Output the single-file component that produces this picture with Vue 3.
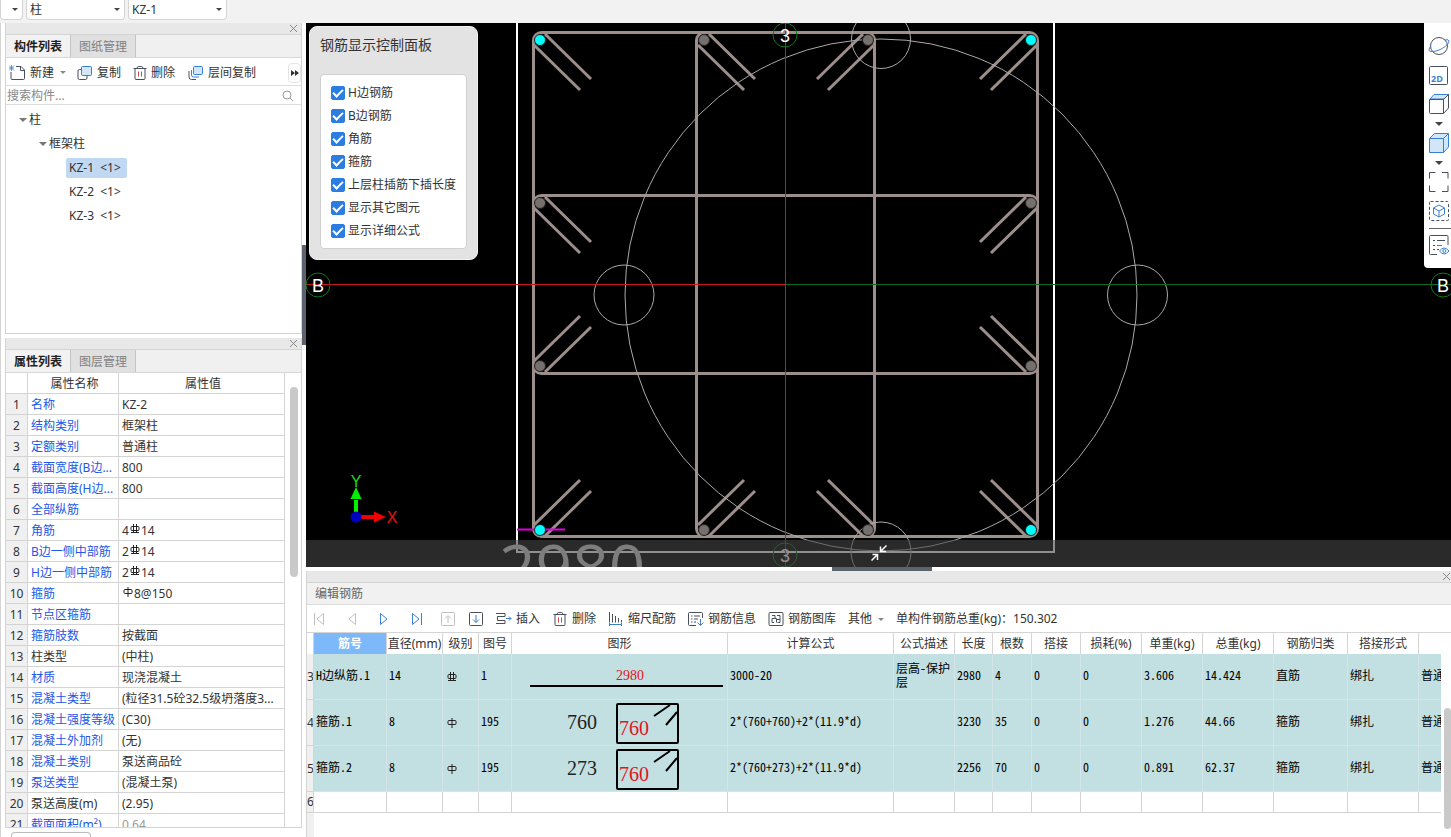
<template>
  <div class="app">
    <header class="topbar">
      <label class="combo combo-first"><select aria-label="楼层"><option></option></select></label>
      <label class="combo"><select aria-label="构件类型"><option>柱</option></select></label>
      <label class="combo"><select aria-label="构件名称"><option>KZ-1</option></select></label>
    </header>

    <div class="body">
      <aside class="sidebar">
        <section class="panel panel-list">
          <div class="strip">
            <button class="close" aria-label="关闭">
              <svg width="9" height="9" viewBox="0 0 9 9"><path d="M1 1l7 7M8 1l-7 7" /></svg>
            </button>
          </div>
          <div class="tabs">
            <button class="tab active">构件列表</button>
            <button class="tab">图纸管理</button>
          </div>
          <div class="tools">
            <button class="tool">
              <svg class="icon" width="17" height="16" viewBox="0 0 17 16">
                <path d="M7 1.500h5l3.500 3.500v8.500q0 1-1 1H3q-1 0-1-1V7M11.500 1.500v4h4" />
                <path class="blue thin" d="M0 .5l5 5M5 .5l-5 5M2.500 0v6M0 3h5" />
              </svg>
              新建
            </button>
            <i class="caret gray"></i>
            <button class="tool copy">
              <svg class="icon" width="16" height="16" viewBox="0 0 16 16">
                <path d="M4 4.500H2.500q-1.500 0-1.500 1.500v7q0 1.500 1.500 1.500h6q1.500 0 1.500-1.500V11" />
                <rect class="blue fill" x="4.500" y="1.500" width="10" height="9" rx="1" />
              </svg>
              复制
            </button>
            <button class="tool del">
              <svg class="icon" width="14" height="16" viewBox="0 0 14 16">
                <path d="M.5 3.500h13M4 3.500q0-2 1.500-2h3q1.500 0 1.500 2M2 3.500v10q0 1 1 1h8q1 0 1-1v-10" />
                <path class="red" d="M5.500 6.500v5M8.500 6.500v5" />
              </svg>
              删除
            </button>
            <button class="tool layer">
              <svg class="icon" width="16" height="16" viewBox="0 0 16 16">
                <path d="M1 6v6q0 2.500 2.500 2.500H8" />
                <path class="blue" d="M3.500 5v5q0 2 2 2H11" />
                <rect class="blue fill" x="5.500" y="1.500" width="9" height="8" rx="1" />
              </svg>
              层间复制
            </button>
            <button class="more" aria-label="更多">
              <svg width="8" height="6" viewBox="0 0 8 6"><path d="M0 0l4 3-4 3zM4 0l4 3-4 3z" fill="#333" /></svg>
            </button>
          </div>
          <div class="search">
            <input type="text" placeholder="搜索构件..." aria-label="搜索构件" />
            <svg width="12" height="12" viewBox="0 0 12 12">
              <circle cx="5" cy="5" r="4" /><path d="M8 8l3 3" />
            </svg>
          </div>
          <ul class="tree">
            <li
              v-for="node in tree"
              :key="node.name"
              :class="['level-' + node.level, { selected: node.name === current }]"
              @click="current = node.name"
            >
              <i v-if="node.level < 3" class="caret tree-caret"></i>
              <span class="node">{{ node.name }} <template v-if="node.count">&nbsp;{{ node.count }}</template></span>
            </li>
          </ul>
        </section>

        <section class="panel panel-props">
          <div class="strip">
            <button class="close" aria-label="关闭">
              <svg width="9" height="9" viewBox="0 0 9 9"><path d="M1 1l7 7M8 1l-7 7" /></svg>
            </button>
          </div>
          <div class="tabs">
            <button class="tab active">属性列表</button>
            <button class="tab">图层管理</button>
          </div>
          <div class="props-wrap">
            <table class="props">
              <colgroup><col class="p-no" /><col class="p-name" /><col /></colgroup>
              <thead>
                <tr><th></th><th>属性名称</th><th>属性值</th></tr>
              </thead>
              <tbody>
                <tr v-for="(p, i) in props" :key="p.name">
                  <td class="no">{{ i + 1 }}</td>
                  <td :class="{ link: !p.plain }">{{ p.name }}</td>
                  <td :class="{ muted: p.muted }">
                    {{ p.value }}<svg v-if="p.grade" class="grade" width="10" height="10" viewBox="0 0 10 10"><path :d="grades[p.grade]" /></svg>{{ p.rest }}
                  </td>
                </tr>
              </tbody>
            </table>
            <div class="scroll"><div class="thumb"></div></div>
          </div>
        </section>
        <div class="stub"></div>
      </aside>

      <main class="main">
        <div class="view-row">
          <div class="splitter">
            <div class="grip"></div>
          </div>
          <div class="canvas">
            <svg class="drawing" viewBox="306 23 1145 544" preserveAspectRatio="xMinYMin slice">
              <g fill="none">
                <path stroke="#fff" stroke-width="2" d="M517 23V552H1054V23" />
                <g stroke="#9c8f8b" stroke-width="3">
                  <rect x="533.500" y="32.500" width="504" height="504" rx="8" />
                  <rect x="696.500" y="32.500" width="178" height="504" rx="8" />
                  <rect x="533.500" y="195.500" width="504" height="178" rx="8" />
                  <path v-for="h in hooks" :key="h" :d="h" />
                </g>
                <g stroke="#a9a9a9">
                  <circle cx="881" cy="295" r="256" />
                  <circle cx="624" cy="295" r="30" />
                  <circle cx="1137.500" cy="295" r="30" />
                  <circle cx="881" cy="39" r="29.500" />
                  <circle cx="881" cy="552" r="30" />
                </g>
                <g class="crisp">
                  <path stroke="#c81818" d="M785.500 23V567" />
                  <path stroke="#c81818" d="M306 284.500H785" />
                  <path stroke="#0c6e1c" d="M786 284.500H1451" />
                </g>
                <path stroke="#e000e0" stroke-width="2" d="M517 529.500H565" />
              </g>
              <g stroke="#222">
                <circle v-for="b in bars" :key="b.x + '-' + b.y" :cx="b.x" :cy="b.y" r="5.500" :fill="b.corner ? '#00ffff' : '#75706e'" />
              </g>
              <g class="axis">
                <g v-for="a in axes" :key="a.x + '-' + a.y">
                  <circle :cx="a.x" :cy="a.y" r="12" />
                  <text :x="a.x" :y="a.y + 7">{{ a.label }}</text>
                </g>
              </g>
              <path stroke="#00f000" stroke-width="4" d="M356 516V500" />
              <path fill="#00f000" d="M350.500 499L356 487l5.500 12z" />
              <path stroke="#f00000" stroke-width="4" d="M357 517H374" />
              <path fill="#f00000" d="M374 511.500L386 517l-12 5.500z" />
              <circle cx="356" cy="517" r="5.500" fill="#0000c0" />
              <text class="ucs" x="356" y="487" fill="#20d820">Y</text>
              <text class="ucs" x="392" y="523" fill="#f01010">X</text>
              <text class="dim" x="499" y="591">2980</text>
            </svg>

            <div class="control">
              <h3>钢筋显示控制面板</h3>
              <div class="options">
                <label v-for="o in options" :key="o.label">
                  <input v-model="o.on" type="checkbox" />{{ o.label }}
                </label>
              </div>
            </div>

            <nav class="viewbar">
              <button aria-label="动态观察">
                <svg class="icon" width="22" height="22" viewBox="0 0 22 22">
                  <circle cx="11" cy="11" r="8.500" />
                  <path class="blue" d="M17 5q4-1 4 1c0 3-5 7-10 9S1 17 1 15q0-2 2-4" />
                </svg>
              </button>
              <button aria-label="二维">
                <svg class="icon" width="22" height="22" viewBox="0 0 22 22">
                  <rect x="1.500" y="2.500" width="18" height="18" rx="1" />
                  <text x="3" y="18">2D</text>
                </svg>
              </button>
              <button aria-label="视图">
                <svg class="icon" width="22" height="22" viewBox="0 0 22 22">
                  <path class="blue fill" d="M2 6l4-4.500h14.500L16 6z" />
                  <path d="M1.500 6.500h14v14h-13q-1 0-1-1zM15.500 6.500l5-5v13.500l-5 5.500" />
                </svg>
              </button>
              <i class="caret"></i>
              <button aria-label="实体">
                <svg class="icon" width="22" height="22" viewBox="0 0 22 22">
                  <path class="blue fill" d="M1.500 6.500l5-5h14v13.500l-5 5.500h-14zM1.500 6.500h14v14M15.500 6.500l5-5" />
                </svg>
              </button>
              <i class="caret"></i>
              <button aria-label="全屏">
                <svg class="icon" width="22" height="22" viewBox="0 0 22 22">
                  <path d="M1.500 7.500V1.500h6M14 1.500h6v6M20 14.500v6h-6M7.500 20.500h-6v-6" />
                </svg>
              </button>
              <button aria-label="局部三维">
                <svg class="icon" width="22" height="22" viewBox="0 0 22 22">
                  <rect x="1.500" y="1.500" width="19" height="19" rx="1" stroke-dasharray="3 2" />
                  <path class="blue" d="M11 5l5.500 3v6L11 17l-5.500-3V8zM5.500 8L11 11l5.500-3M11 11v6" />
                </svg>
              </button>
              <hr />
              <button aria-label="显示设置">
                <svg class="icon" width="22" height="22" viewBox="0 0 22 22">
                  <path d="M20 11V2.500q0-1-1-1H2.500q-1 0-1 1v17q0 1 1 1H9M5 6.500h2M5 11.500h2M5 15.500h2M9 15.500h2M9 6.500h8" />
                  <path class="red" d="M9 11.500h5" />
                  <path class="blue" d="M11.500 17q4.500-6 9.500 0q-5 6-9.500 0z" />
                  <circle class="blue" cx="16.300" cy="17" r="1.500" />
                </svg>
              </button>
            </nav>

            <div class="dock">
              <svg width="16" height="16" viewBox="0 0 16 16">
                <path d="M15.500.5L9.500 6.500M9.500 1.500v5h5.500M.5 15.500l6-6M1.500 9.500h5v5.500" />
              </svg>
            </div>
          </div>
        </div>

        <div class="hsplit"><div class="hgrip"></div></div>

        <section class="editor">
          <div class="strip">
            <button class="close" aria-label="关闭">
              <svg width="9" height="9" viewBox="0 0 9 9"><path d="M1 1l7 7M8 1l-7 7" /></svg>
            </button>
          </div>
          <h2 class="title">编辑钢筋</h2>
          <div class="ebar">
            <button class="nav" aria-label="第一行">
              <svg class="icon off" width="16" height="16" viewBox="0 0 16 16"><path d="M2.500 2v12M11.500 2.500v11L5 8z" /></svg>
            </button>
            <button class="nav" aria-label="上一行">
              <svg class="icon off" width="16" height="16" viewBox="0 0 16 16"><path d="M11.500 2.500v11L5 8z" /></svg>
            </button>
            <button class="nav" aria-label="下一行">
              <svg class="icon" width="16" height="16" viewBox="0 0 16 16"><path class="blue" d="M4.500 2.500v11L11 8z" /></svg>
            </button>
            <button class="nav" aria-label="最后一行">
              <svg class="icon" width="16" height="16" viewBox="0 0 16 16"><path class="blue" d="M4.500 2.500v11L11 8zM13.500 2v12" /></svg>
            </button>
            <button class="step" aria-label="上移">
              <svg class="icon off" width="16" height="16" viewBox="0 0 16 16">
                <rect x="1.500" y="1.500" width="13" height="13" rx="1" /><path d="M8 12V5M5 7.500l3-3 3 3" />
              </svg>
            </button>
            <button class="step" aria-label="下移">
              <svg class="icon" width="16" height="16" viewBox="0 0 16 16">
                <rect x="1.500" y="1.500" width="13" height="13" rx="1" /><path class="blue" d="M8 4v7.500M5 8.500l3 3 3-3" />
              </svg>
            </button>
            <button class="tool">
              <svg class="icon" width="16" height="16" viewBox="0 0 16 16">
                <path d="M0 2.500h9M0 12.500h9M9 5.500H1.500v4H9M9 2.500v3M9 9.500v3" />
                <path class="blue" d="M10 7.500h5M13 5.500l2 2-2 2" />
              </svg>
              插入
            </button>
            <button class="tool">
              <svg class="icon" width="16" height="16" viewBox="-1 0 16 16">
                <path d="M.5 3.500h13M4 3.500q0-2 1.500-2h3q1.500 0 1.500 2M2 3.500v10q0 1 1 1h8q1 0 1-1v-10" />
                <path class="red" d="M5.500 6.500v5M8.500 6.500v5" />
              </svg>
              删除
            </button>
            <button class="tool">
              <svg class="icon" width="16" height="16" viewBox="0 0 16 16">
                <path d="M1.500 1v10.500M4.500 3v8.500M7.500 5v6.500M10.500 7v4.500M13.500 9v2.500" />
                <path class="blue" d="M1 13.500h13M1.500 12v3M13.500 12v3" />
              </svg>
              缩尺配筋
            </button>
            <button class="tool">
              <svg class="icon" width="16" height="16" viewBox="0 0 16 16">
                <path d="M14.500 7V2.500q0-1-1-1h-12q-1 0-1 1v11q0 1 1 1H8M3 5h1.500M6 5h6M3 8h1.500M6 8h4M3 11h1.500M6 11h2" />
                <path class="blue" d="M12.500 8v6M9.500 11.500l3 3 3-3" />
              </svg>
              钢筋信息
            </button>
            <button class="tool">
              <svg class="icon" width="16" height="16" viewBox="0 0 16 16">
                <rect x="1" y="1.500" width="14" height="13" rx="1" />
                <path d="M4 4.500h3v3H4v4h2M6 7.500h2.500v4M9 4.500h3v4M8.500 8.500h3.500v3H9.500" />
              </svg>
              钢筋图库
            </button>
            <button class="tool other">其他 <i class="caret gray"></i></button>
            <span class="sum">单构件钢筋总重(kg)：150.302</span>
          </div>

          <div class="grid-wrap">
            <div class="grid-clip">
              <table class="grid">
                <colgroup>
                  <col class="g-no" />
                  <col v-for="c in columns" :key="c.title" :style="{ width: c.width + 'px' }" />
                </colgroup>
                <thead>
                  <tr>
                    <th></th>
                    <th v-for="(c, i) in columns" :key="c.title" :class="{ picked: i === 0 }">{{ c.title }}</th>
                  </tr>
                </thead>
                <tbody>
                  <tr v-for="r in rows" :key="r.no" class="data">
                    <td class="no">{{ r.no }}</td>
                    <td>{{ r.name }}</td>
                    <td>{{ r.dia }}</td>
                    <td>
                      <svg class="grade" width="10" height="10" viewBox="0 0 10 10"><path :d="grades[r.grade]" /></svg>
                    </td>
                    <td>{{ r.shape }}</td>
                    <td class="figure">
                      <svg v-if="r.side" width="215" height="44" viewBox="0 0 215 44">
                        <text class="big" x="55" y="28">{{ r.side }}</text>
                        <text class="big red-text" x="107" y="34">760</text>
                        <rect x="105" y="3" width="61" height="39" rx="1" />
                        <path d="M142 15l16-11M154 24l11-13" />
                      </svg>
                      <svg v-else width="215" height="44" viewBox="0 0 215 44">
                        <text class="small red-text" x="104" y="25">2980</text>
                        <path d="M18 31h193" />
                      </svg>
                    </td>
                    <td>{{ r.formula }}</td>
                    <td class="wrap">{{ r.desc }}</td>
                    <td>{{ r.length }}</td>
                    <td>{{ r.count }}</td>
                    <td>0</td>
                    <td>0</td>
                    <td>{{ r.unit }}</td>
                    <td>{{ r.total }}</td>
                    <td>{{ r.kind }}</td>
                    <td>绑扎</td>
                    <td>普通钢筋</td>
                  </tr>
                  <tr class="blank">
                    <td class="no">6</td>
                    <td v-for="c in columns" :key="c.title"></td>
                  </tr>
                </tbody>
              </table>
              <div class="gutter"></div>
            </div>
            <div class="grid-scroll"><div class="thumb"></div></div>
          </div>
        </section>
      </main>
    </div>
  </div>
</template>

<script setup>
import { ref } from 'vue'

const current = ref('KZ-1')

const tree = [
  { name: '柱', level: 1 },
  { name: '框架柱', level: 2 },
  { name: 'KZ-1', level: 3, count: '<1>' },
  { name: 'KZ-2', level: 3, count: '<1>' },
  { name: 'KZ-3', level: 3, count: '<1>' }
]

// rebar grade marks: A = HPB300, C = HRB400
const grades = {
  A: 'M2 2.500h6q1 0 1 1v2q0 1-1 1h-6q-1 0-1-1v-2q0-1 1-1zM5 0v10',
  C: 'M2 2.500h6q1 0 1 1v2q0 1-1 1h-6q-1 0-1-1v-2q0-1 1-1zM3.500 0v9M6.500 0v9M1 8.500h8'
}

const props = [
  { name: '名称', value: 'KZ-2' },
  { name: '结构类别', value: '框架柱' },
  { name: '定额类别', value: '普通柱' },
  { name: '截面宽度(B边...', value: '800' },
  { name: '截面高度(H边...', value: '800' },
  { name: '全部纵筋', value: '' },
  { name: '角筋', value: '4', grade: 'C', rest: '14' },
  { name: 'B边一侧中部筋', value: '2', grade: 'C', rest: '14' },
  { name: 'H边一侧中部筋', value: '2', grade: 'C', rest: '14' },
  { name: '箍筋', value: '', grade: 'A', rest: '8@150' },
  { name: '节点区箍筋', value: '' },
  { name: '箍筋肢数', value: '按截面' },
  { name: '柱类型', value: '(中柱)', plain: true },
  { name: '材质', value: '现浇混凝土' },
  { name: '混凝土类型', value: '(粒径31.5砼32.5级坍落度3...' },
  { name: '混凝土强度等级', value: '(C30)' },
  { name: '混凝土外加剂', value: '(无)' },
  { name: '混凝土类别', value: '泵送商品砼' },
  { name: '泵送类型', value: '(混凝土泵)' },
  { name: '泵送高度(m)', value: '(2.95)', plain: true },
  { name: '截面面积(m²)', value: '0.64', muted: true }
]

const options = ref(
  ['H边钢筋', 'B边钢筋', '角筋', '箍筋', '上层柱插筋下插长度', '显示其它图元', '显示详细公式'].map(label => ({
    label,
    on: true
  }))
)

const bars = []
for (const y of [40, 530]) {
  for (const x of [540, 704, 868, 1031]) {
    bars.push({ x, y, corner: x === 540 || x === 1031 })
  }
}
for (const y of [203, 366]) {
  for (const x of [540, 1031]) bars.push({ x, y, corner: false })
}

// two 135° hook legs for every bar, pointing into the section
const hooks = bars.map(({ x, y }) => {
  const dx = x < 785 ? 1 : -1
  const dy = y < 285 ? 1 : -1
  return `M${x + 5 * dx} ${y - 6 * dy}L${x + 51 * dx} ${y + 39 * dy}M${x - 6 * dx} ${y + 5 * dy}L${x + 40 * dx} ${y + 50 * dy}`
})

const axes = [
  { x: 785, y: 35, label: '3' },
  { x: 785, y: 555, label: '3' },
  { x: 318, y: 285, label: 'B' },
  { x: 1443, y: 285, label: 'B' }
]

const columns = [
  { title: '筋号', width: 73 },
  { title: '直径(mm)', width: 56 },
  { title: '级别', width: 36 },
  { title: '图号', width: 33 },
  { title: '图形', width: 216 },
  { title: '计算公式', width: 166 },
  { title: '公式描述', width: 61 },
  { title: '长度', width: 38 },
  { title: '根数', width: 39 },
  { title: '搭接', width: 49 },
  { title: '损耗(%)', width: 61 },
  { title: '单重(kg)', width: 61 },
  { title: '总重(kg)', width: 71 },
  { title: '钢筋归类', width: 74 },
  { title: '搭接形式', width: 71 },
  { title: '', width: 110 }
]

const rows = [
  { no: 3, name: 'H边纵筋.1', dia: 14, grade: 'C', shape: 1, formula: '3000-20', desc: '层高-保护层', length: 2980, count: 4, unit: '3.606', total: '14.424', kind: '直筋' },
  { no: 4, name: '箍筋.1', dia: 8, grade: 'A', shape: 195, side: 760, formula: '2*(760+760)+2*(11.9*d)', length: 3230, count: 35, unit: '1.276', total: '44.66', kind: '箍筋' },
  { no: 5, name: '箍筋.2', dia: 8, grade: 'A', shape: 195, side: 273, formula: '2*(760+273)+2*(11.9*d)', length: 2256, count: 70, unit: '0.891', total: '62.37', kind: '箍筋' }
]
</script>

<style>
body {
  background: #fff;
  overflow: hidden;
}
</style>

<style scoped>
.app {
  display: flex;
  flex-direction: column;
  height: 100vh;
  font: 12px/20px 'Noto Sans', 'Noto Sans CJK SC', sans-serif;
  color: #333;
  background: #fff;
}

.app * {
  box-sizing: border-box;
}

button {
  font: inherit;
  color: inherit;
  background: none;
  border: 0;
  padding: 0;
  cursor: pointer;
}

.topbar {
  display: flex;
  gap: 3px;
  flex: none;
  height: 23px;
  background: #f2f2f2;
}

.combo {
  position: relative;
  width: 99px;
  height: 20px;
}

.combo-first {
  width: 23px;
}

.combo select {
  appearance: none;
  width: 100%;
  height: 20px;
  padding: 0 3px;
  font: inherit;
  color: #333;
  background: #fff;
  border: 1px solid #d4d4d4;
  border-top: 0;
  border-radius: 0 0 4px 4px;
}

.combo::after {
  content: '';
  position: absolute;
  right: 5px;
  top: 8px;
  border: 3px solid transparent;
  border-top-color: #444;
  border-bottom: 0;
}

.caret {
  flex: none;
  width: 0;
  height: 0;
  border: 4px solid transparent;
  border-top-color: #444;
  border-bottom: 0;
}

.caret.gray {
  display: inline-block;
  border-width: 3px 3px 0;
  border-top-color: #888;
}

.body {
  display: flex;
  flex: 1;
  min-height: 0;
}

.sidebar {
  display: flex;
  flex-direction: column;
  flex: none;
  width: 302px;
  padding-left: 4px;
  border-left: 1px solid #d4d4d4;
}

.panel {
  display: flex;
  flex-direction: column;
  min-height: 0;
  border: 1px solid #d4d4d4;
  border-top: 0;
  overflow: hidden;
}

.panel-list {
  flex: 311 1 0;
  margin-bottom: 4px;
}

.panel-props {
  flex: 490 1 0;
}

.stub {
  flex: none;
  width: 80px;
  height: 5px;
  margin: 4px 0 0 6px;
  border: 1px solid #bbb;
  border-bottom: 0;
  border-radius: 4px 4px 0 0;
}

.strip {
  display: flex;
  flex: none;
  align-items: center;
  justify-content: flex-end;
  height: 12px;
  padding-right: 3px;
  background: #e8e8e8;
  border-bottom: 1px solid #d4d4d4;
}

.close {
  display: flex;
}

.close path {
  fill: none;
  stroke: #888;
}

.tabs {
  display: flex;
  flex: none;
  height: 23px;
  background: #f0f0f0;
  border-bottom: 1px solid #d8d8d8;
}

.tab {
  width: 65px;
  padding-top: 2px;
  color: #808080;
  background: #e0e0e0;
  border-right: 1px solid #c4c4c4;
}

.tab.active {
  color: #222;
  font-weight: bold;
  background: #f2f2f2;
}

.tools {
  display: flex;
  flex: none;
  align-items: center;
  height: 28px;
  padding: 2px 0 0 3px;
  border-bottom: 1px solid #ddd;
}

.tool {
  display: flex;
  align-items: center;
  gap: 4px;
  white-space: nowrap;
}

.tools .caret {
  margin-left: 6px;
}

.copy {
  margin-left: 11px;
}

.del {
  margin-left: 12px;
}

.layer {
  margin-left: 13px;
}

.more {
  display: flex;
  align-items: center;
  justify-content: center;
  width: 13px;
  height: 20px;
  margin-left: auto;
  border: 1px solid #e4e4e4;
  border-radius: 4px;
}

.icon {
  flex: none;
  fill: none;
  stroke: #4a4f5c;
}

.icon .blue {
  stroke: #3b7fd0;
}

.icon .fill {
  fill: #d2e6fa;
}

.icon .thin {
  stroke-width: 0.8;
}

.icon .red {
  stroke: #cc4b45;
}

.icon.off {
  stroke: #c0c0c0;
}

.icon text {
  font: bold 9px 'Open Sans', sans-serif;
  fill: #3b7fd0;
  stroke: none;
}

.search {
  display: flex;
  flex: none;
  align-items: center;
  height: 19px;
  padding: 1px 7px 0 1px;
  border-bottom: 1px solid #ddd;
}

.search input {
  flex: 1;
  min-width: 0;
  height: 17px;
  padding: 0;
  font: inherit;
  line-height: 17px;
  background: transparent;
  border: 0;
  outline: 0;
}

.search input::placeholder {
  color: #888;
}

.search svg {
  fill: none;
  stroke: #999;
}

.tree {
  margin: 0;
  padding: 3px 0 0;
  list-style: none;
}

.tree li {
  display: flex;
  align-items: center;
  height: 24px;
}

.level-1 {
  padding-left: 13px;
}

.level-2 {
  padding-left: 33px;
}

.level-3 {
  padding-left: 60px;
}

.tree-caret {
  border-top-color: #777;
}

.node {
  padding: 0 2px;
}

.level-3 .node {
  padding: 0 6px 0 3px;
  border-radius: 2px;
}

.selected .node {
  background: #c0d8f1;
}

.props-wrap {
  display: flex;
  align-items: flex-start;
  flex: 1;
  min-height: 0;
  overflow: hidden;
}

.props {
  flex: 1;
  width: 0;
  table-layout: fixed;
  border-collapse: separate;
  border-spacing: 0;
}

.p-no {
  width: 22px;
}

.p-name {
  width: 91px;
}

.props th,
.props td {
  height: 21px;
  padding: 2px 0 0 3px;
  line-height: 18px;
  font-weight: normal;
  text-align: left;
  white-space: nowrap;
  border-right: 1px solid #d4d4d4;
  border-bottom: 1px solid #d4d4d4;
}

.props th {
  text-align: center;
}

.props .no {
  padding-left: 0;
  text-align: center;
  background: #f0f0f0;
}

.props .link {
  color: #2058e8;
}

.props .muted {
  color: #999;
}

.grade {
  fill: none;
  stroke: #222;
}

.props .grade {
  margin: 0 1px;
  vertical-align: 1px;
}

.scroll {
  flex: none;
  align-self: stretch;
  width: 16px;
  padding: 14px 3px 0 5px;
}

.thumb {
  height: 190px;
  background: #c9c9c9;
  border-radius: 4px;
}

.main {
  display: flex;
  flex-direction: column;
  flex: 1;
  min-width: 0;
}

.view-row {
  display: flex;
  flex: 1;
  min-height: 0;
}

.splitter {
  display: flex;
  align-items: center;
  width: 4px;
}

.grip {
  width: 4px;
  height: 100px;
  background: #5d636c;
}

.canvas {
  position: relative;
  flex: 1;
  min-width: 0;
  background: #000;
  overflow: hidden;
}

.drawing {
  display: block;
  width: 100%;
  height: 100%;
}

.crisp {
  shape-rendering: crispEdges;
}

.axis circle {
  fill: none;
  stroke: #107818;
}

.axis text {
  font: 18px 'Liberation Sans', sans-serif;
  fill: #fff;
  text-anchor: middle;
}

.ucs {
  font: 16px 'Liberation Sans', sans-serif;
  text-anchor: middle;
}

.dim {
  font: 64px 'Open Sans', sans-serif;
  fill: #d0d0d0;
}

.control {
  position: absolute;
  left: 3px;
  top: 3px;
  padding: 8px 10px 10px;
  background: #e3e3e3;
  border: 1px solid #f0f0f0;
  border-radius: 8px;
}

.control h3 {
  margin: 0 0 19px;
  font-size: 14px;
  font-weight: normal;
  line-height: 20px;
}

.options {
  padding: 6px 10px;
  background: #fff;
  border: 1px solid #d0d0d0;
  border-radius: 4px;
}

.options label {
  display: flex;
  align-items: center;
  gap: 3px;
  height: 23px;
}

.options input {
  appearance: none;
  display: flex;
  align-items: center;
  justify-content: center;
  width: 14px;
  height: 14px;
  margin: 0;
  border: 1px solid #2b7de1;
  border-radius: 2px;
}

.options input:checked {
  background: #2b7de1;
}

.options input:checked::after {
  content: '';
  width: 4px;
  height: 8px;
  margin-bottom: 2px;
  border: solid #fff;
  border-width: 0 2px 2px 0;
  transform: rotate(45deg);
}

.viewbar {
  position: absolute;
  right: 0;
  top: 0;
  display: flex;
  flex-direction: column;
  align-items: center;
  width: 27px;
  padding: 12px 0;
  background: #fff;
  border-radius: 0 0 0 4px;
}

.viewbar button {
  display: flex;
  margin-left: 3px;
  height: 22px;
}

.viewbar button + button {
  margin-top: 7px;
}

.viewbar .caret {
  margin: 7px 0 3px 3px;
}

.viewbar .caret + button {
  margin-top: 3px;
}

.viewbar hr {
  width: 22px;
  margin: 6px 0 5px 5px;
  border: 0;
  border-top: 1px solid #666;
}

.dock {
  position: absolute;
  left: 0;
  right: 0;
  bottom: 0;
  display: flex;
  align-items: center;
  justify-content: center;
  height: 27px;
  padding-bottom: 2px;
  background: rgba(70, 70, 70, 0.6);
}

.dock path {
  fill: none;
  stroke: #fff;
  stroke-width: 1.5;
}

.hsplit {
  flex: none;
  display: flex;
  justify-content: center;
  height: 4px;
  padding-left: 11px;
}

.hgrip {
  width: 100px;
  height: 4px;
  background: #5d636c;
}

.editor {
  flex: none;
  margin-left: 4px;
  border-left: 1px solid #d4d4d4;
}

.editor .strip {
  padding-right: 0;
}

.title {
  margin: 0;
  padding: 1px 0 0 8px;
  font-size: 12px;
  font-weight: normal;
  line-height: 20px;
  color: #666;
  background: #f1f1f1;
  border-bottom: 1px solid #ddd;
}

.ebar {
  display: flex;
  align-items: center;
  gap: 12px;
  height: 27px;
  padding: 1px 0 0 5px;
}

.nav {
  display: flex;
  margin-right: 4px;
}

.step {
  display: flex;
}

.ebar .other {
  gap: 6px;
}

.grid-wrap {
  display: flex;
  height: 205px;
  border-top: 1px solid #d4d4d4;
}

.grid-clip {
  display: flex;
  flex-direction: column;
  flex: 1;
  min-width: 0;
  overflow: hidden;
}

.grid {
  flex: none;
  width: 1221px;
  table-layout: fixed;
  border-collapse: separate;
  border-spacing: 0;
}

.g-no {
  width: 7px;
}

.gutter {
  flex: 1;
  width: 7px;
  background: #f0f0f0;
}

.grid th,
.grid td {
  padding: 0 2px;
  text-align: left;
  white-space: nowrap;
  overflow: hidden;
  border-right: 1px solid #d4d4d4;
  border-bottom: 1px solid #d4d4d4;
}

.grid th {
  height: 21px;
  padding: 0;
  font-weight: normal;
  text-align: center;
  border-bottom: 0;
}

.grid th.picked {
  color: #fff;
  font-weight: bold;
  background: #7db8fa;
}

.grid .data td {
  height: 46px;
  padding-bottom: 4px;
  font: 12px/14px 'Noto Sans Mono CJK SC', 'Noto Sans CJK SC', monospace;
  color: #000;
  background: #c2dfe1;
  border-color: #d3e5e6;
}

.data .grade {
  display: block;
  margin: 4px 0 0 2px;
}

.grid .data .wrap {
  white-space: normal;
}

.grid .data .figure {
  padding: 0;
}

.grid .data .no,
.grid .no {
  padding: 0;
  font: 12px/20px 'Noto Sans', sans-serif;
  color: #333;
  background: #f0f0f0;
  border-color: #d4d4d4;
}

.blank td {
  height: 21px;
}

.figure svg {
  display: block;
  fill: none;
  stroke: #000;
  stroke-width: 2;
}

.figure text {
  fill: #222;
  stroke: none;
}

.figure .big {
  font: 20px 'Liberation Serif', serif;
}

.figure .small {
  font: 14px 'Liberation Serif', serif;
}

.figure .red-text {
  fill: #e0141e;
}

.grid-scroll {
  flex: none;
  width: 10px;
  padding: 75px 0 0 3px;
}

.grid-scroll .thumb {
  height: 121px;
}
</style>
